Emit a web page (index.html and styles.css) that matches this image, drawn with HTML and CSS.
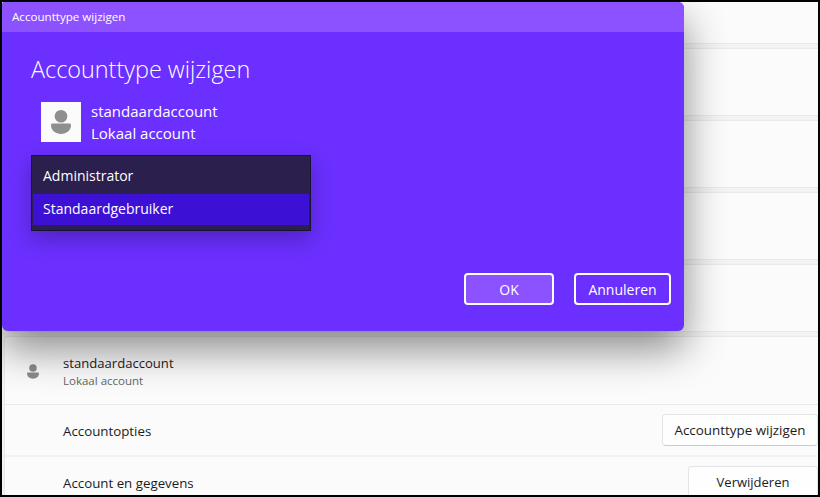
FILE: index.html
```html
<!DOCTYPE html>
<html lang="nl">
<head>
  <meta charset="UTF-8" />
  <title>Accounttype wijzigen</title>
  <link rel="stylesheet" href="styles.css">
</head>
<body>
  <div class="screen">
    <div class="settings">
      <div class="card card-top"></div>
      <div class="card card-plain"></div>
      <div class="card card-plain"></div>
      <div class="card card-plain"></div>
      <div class="card card-plain"></div>
      <div class="card card-account">
        <div class="row row-user">
          <svg class="user-icon-small" viewBox="0 0 20 24"><circle cx="10" cy="6.300" r="6.300"/><path d="M1.500 13.500h17c.9 0 1.500.6 1.500 1.500 0 5.500-4.500 9-10 9S0 20.500 0 15c0-.9.6-1.500 1.500-1.500z"/></svg>
          <div class="user-text">
            <div class="user-name">standaardaccount</div>
            <div class="user-type">Lokaal account</div>
          </div>
        </div>
        <div class="row row-option">
          <span class="option-label">Accountopties</span>
          <button class="light-btn">Accounttype wijzigen</button>
        </div>
        <div class="row row-option">
          <span class="option-label">Account en gegevens</span>
          <button class="light-btn btn-remove">Verwijderen</button>
        </div>
      </div>
    </div>

    <div class="dialog">
      <div class="titlebar">Accounttype wijzigen</div>
      <div class="dialog-body">
        <h1>Accounttype wijzigen</h1>
        <div class="account">
          <div class="avatar">
            <svg viewBox="0 0 20 24"><circle cx="10" cy="6.300" r="6.300"/><path d="M1.500 13.500h17c.9 0 1.500.6 1.500 1.500 0 5.500-4.500 9-10 9S0 20.500 0 15c0-.9.6-1.500 1.500-1.500z"/></svg>
          </div>
          <div class="account-text">
            <div>standaardaccount</div>
            <div>Lokaal account</div>
          </div>
        </div>
        <div class="dropdown">
          <div class="dropdown-item">Administrator</div>
          <div class="dropdown-item selected">Standaardgebruiker</div>
        </div>
        <div class="actions">
          <button class="dialog-btn btn-ok">OK</button>
          <button class="dialog-btn btn-cancel">Annuleren</button>
        </div>
      </div>
    </div>
  </div>
</body>
</html>
```

FILE: styles.css
```css
* {
  box-sizing: border-box;
}
html, body {
  margin: 0;
  padding: 0;
  height: 100%;
  overflow: hidden;
}
body {
  font-family: 'Open Sans', 'Noto Sans', sans-serif;
  background: #000;
}
.screen {
  position: relative;
  width: 820px;
  height: 497px;
  border: 2px solid #000;
  background: #f3f3f3;
  overflow: hidden;
}
.settings {
  display: flex;
  flex-direction: column;
  gap: 4px;
  padding-left: 2px;
}
.card {
  background: #fbfbfb;
  border: 1px solid #e9e9e9;
  border-right: 0;
  border-radius: 4px 0 0 4px;
}
.card-top {
  height: 43px;
  margin-top: -1px;
}
.card-plain {
  height: 68px;
}
.card-account {
  border-bottom: 0;
}
.row {
  display: flex;
  align-items: center;
}
.row-user {
  height: 68px;
  padding: 1px 0 0 22px;
  border-bottom: 1px solid #e9e9e9;
}
.user-icon-small {
  width: 12px;
  height: 15px;
  fill: #8b8b8b;
  margin-right: 24px;
}
.user-name {
  font-size: 13.100px;
  line-height: 18px;
  color: #1b1b1b;
}
.user-type {
  font-size: 11.500px;
  line-height: 16px;
  margin-top: 1px;
  color: #666;
}
.row-option {
  height: 52px;
  padding-left: 58px;
  justify-content: space-between;
  font-size: 13.300px;
  color: #1b1b1b;
  border-bottom: 2px solid #f3f3f3;
}
.option-label {
  padding-top: 2px;
}
.light-btn {
  font-family: inherit;
  font-size: 13.400px;
  color: #1b1b1b;
  background: #fefefe;
  border: 1px solid #e5e5e5;
  border-bottom-color: #ccc;
  border-radius: 4px;
  height: 32px;
  width: 156px;
  padding: 0;
}
.btn-remove {
  width: 130px;
  font-size: 13px;
}
.dialog {
  position: absolute;
  left: 0;
  top: 0;
  width: 682px;
  height: 329px;
  background: #6b2fff;
  border-radius: 3px 6px 6px 6px;
  box-shadow: 0 18px 42px rgba(0, 0, 0, 0.46);
  color: #fff;
}
.titlebar {
  height: 30px;
  padding-left: 10px;
  font-size: 11.600px;
  line-height: 30px;
  background: #8c52ff;
  border-radius: 3px 6px 0 0;
}
.dialog-body {
  position: relative;
  height: 299px;
  padding: 21px 0 0 29px;
}
h1 {
  margin: 0;
  font-size: 23.400px;
  font-weight: 300;
  line-height: 32px;
}
.account {
  display: flex;
  align-items: center;
  gap: 10px;
  margin: 14px 0 0 10px;
}
.avatar {
  width: 40px;
  height: 40px;
  background: #fbfbfb;
  display: flex;
  align-items: center;
  justify-content: center;
}
.avatar svg {
  width: 20px;
  height: 24px;
  fill: #8f8f8f;
}
.account-text {
  font-size: 15px;
  line-height: 22px;
  padding-top: 1px;
}
.dropdown {
  position: absolute;
  left: 29px;
  top: 123px;
  width: 280px;
  height: 76px;
  padding: 0 1px;
  background: #2a1f4d;
  border: 1px solid #1a1233;
  box-shadow: 0 8px 20px rgba(0, 0, 0, 0.26);
}
.dropdown-item {
  height: 38px;
  padding-left: 10px;
  font-size: 14px;
  line-height: 39px;
}
.selected {
  height: 31px;
  line-height: 30px;
  background: #3d10d6;
}
.actions {
  position: absolute;
  right: 13px;
  top: 241px;
  display: flex;
  gap: 20px;
}
.dialog-btn {
  height: 32px;
  font-family: inherit;
  font-size: 14px;
  color: #fff;
  border: 2px solid #fff;
  border-radius: 4px;
  padding: 0;
}
.btn-ok {
  width: 90px;
  background: #8c52ff;
}
.btn-cancel {
  width: 97px;
  background: #6b2fff;
}
```
